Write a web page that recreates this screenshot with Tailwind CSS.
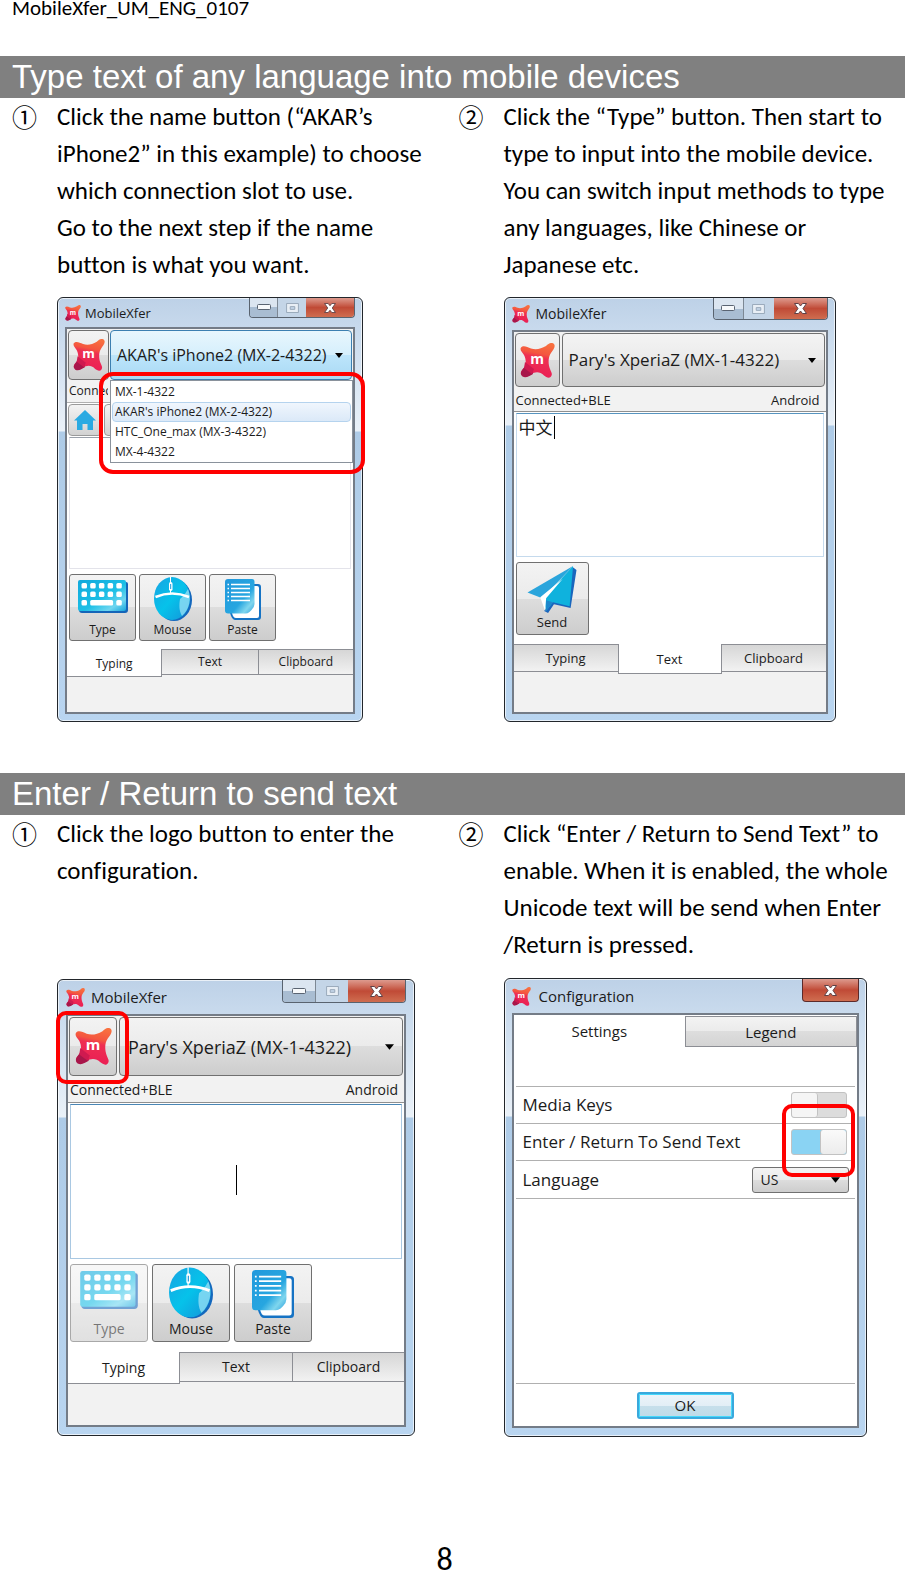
<!DOCTYPE html>
<html lang="en">
<head>
  <meta charset="UTF-8" />
  <meta name="viewport" content="width=device-width, initial-scale=1.0"/>
  <title>MobileXfer User Manual</title>
  <script src="https://cdn.jsdelivr.net/npm/@tailwindcss/browser@4"></script>
</head>
<body class="bg-white text-black font-[Carlito,Lato,sans-serif] [font-variant-ligatures:none]">

  <!-- Shared icons -->
  <svg class="absolute w-0 h-0" aria-hidden="true">
    <defs>
      <linearGradient id="logoFill" x1="0.6" y1="0" x2="0.4" y2="1">
        <stop offset="0" stop-color="#f8703f"/>
        <stop offset="0.3" stop-color="#f4563f"/>
        <stop offset="0.42" stop-color="#ee2f52"/>
        <stop offset="1" stop-color="#ea1d55"/>
      </linearGradient>
      <linearGradient id="cyanFill" x1="0" y1="0" x2="1" y2="1">
        <stop offset="0" stop-color="#12a9dc"/>
        <stop offset="0.55" stop-color="#1cbfe6"/>
        <stop offset="0.8" stop-color="#6fd6f0"/>
        <stop offset="1" stop-color="#17a5dc"/>
      </linearGradient>
      <linearGradient id="mouseFill" x1="0" y1="0" x2="1" y2="1">
        <stop offset="0" stop-color="#19a3e2"/>
        <stop offset="0.5" stop-color="#06c2ea"/>
        <stop offset="1" stop-color="#1593d8"/>
      </linearGradient>
      <linearGradient id="pasteFill" x1="0" y1="0" x2="1" y2="1">
        <stop offset="0" stop-color="#2298dc"/>
        <stop offset="0.6" stop-color="#27a6e0"/>
        <stop offset="0.8" stop-color="#7fd6ee"/>
        <stop offset="1" stop-color="#2c9fdc"/>
      </linearGradient>
    </defs>
    <symbol id="logo" viewBox="0 0 35 35">
      <path fill="url(#logoFill)" d="M1 4.500C3 2 7 3.500 11 5.500c5 1.500 10 .5 15-2.500 3-3 6-4 8-2 2 3-1 6-3 9-3 4-3 11-1 16 1 3 3 5 1 7.500-2 2.500-5 .5-7-1-4-4-9-4-13-1-3 2-6 3-8.500 1C-.5 31 1 28 3 26c4-4 3-10 1-14C2 9-.5 7 1 4.500z"/>
      <path fill="#a8164a" d="M4.500 24l7 2 1.500 5c-4 2-7 4.500-10.500 2.500C-.5 31 1 28 4.500 24z"/>
      <path fill="#cf1a50" d="M5 19l9 7-2 5-8-6z"/>
      <text x="17" y="21" text-anchor="middle" font-size="14" font-weight="700" fill="#fff" font-family="Open Sans, sans-serif">m</text>
    </symbol>
    <symbol id="keyboard" viewBox="0 0 50 33">
      <path fill="#1565b8" d="M3 2h45q2 0 2 2v26q0 3-3 3H4q-3 0-3-3z"/>
      <rect width="48" height="31" rx="2" fill="url(#cyanFill)"/>
      <g fill="#fff">
        <rect x="3.500" y="3" width="5.500" height="5.500" rx="1.500"/><rect x="12.200" y="3" width="5.500" height="5.500" rx="1.500"/><rect x="20.900" y="3" width="5.500" height="5.500" rx="1.500"/><rect x="29.600" y="3" width="5.500" height="5.500" rx="1.500"/><rect x="38.300" y="3" width="5.500" height="5.500" rx="1.500"/>
        <rect x="3.500" y="11.500" width="5.500" height="5.500" rx="1.500"/><rect x="12.200" y="11.500" width="5.500" height="5.500" rx="1.500"/><rect x="20.900" y="11.500" width="5.500" height="5.500" rx="1.500"/><rect x="29.600" y="11.500" width="5.500" height="5.500" rx="1.500"/><rect x="38.300" y="11.500" width="5.500" height="5.500" rx="1.500"/>
        <rect x="3.500" y="20" width="5.500" height="5.500" rx="1.500"/><rect x="12.200" y="20" width="22.900" height="5.500" rx="1.500"/><rect x="38.300" y="20" width="5.500" height="5.500" rx="1.500"/>
      </g>
    </symbol>
    <symbol id="mouse" viewBox="0 0 38 44">
      <ellipse cx="20" cy="23" rx="18" ry="21" fill="#1468bd"/>
      <ellipse cx="18" cy="21.500" rx="18" ry="21.500" fill="url(#mouseFill)"/>
      <path fill="#9be2f6" d="M26 22c5-4 6-7 8-10 4 10 1 21-6 27-3-5-3-11-2-17z" opacity=".75"/>
      <path fill="none" stroke="#fff" stroke-width="2.500" d="M1.500 20Q18 13 35 20"/>
      <path stroke="#fff" stroke-width="1" d="M16.500 0v17"/>
      <rect x="15" y="5" width="3.500" height="9" rx="1.700" fill="#fff"/>
      <path stroke="#1698dc" stroke-width="1" d="M16.700 7v5"/>
    </symbol>
    <symbol id="paste" viewBox="0 0 36 41">
      <path fill="#1673c4" d="M10 5h23q3 0 3 3v30q0 3-3 3H10q-3 0-5-7z"/>
      <path fill="#fff" d="M10 7h22q2 0 2 2v28q0 2-2 2H11q-3 0-4-5z"/>
      <path fill="url(#pasteFill)" d="M3 0h24q2.500 0 2.500 3v22q0 3-3 6l-2 2q-2 1.500-4 1.500H3q-3 0-3-3V3q0-3 3-3z"/>
      <path stroke="#fff" stroke-width="1.500" d="M6 5.500h19M6 9.500h19M6 13.500h19M6 17.500h19M6 21.500h19"/>
      <path stroke="#fff" stroke-width="1.500" d="M2.500 5.500h1.500M2.500 9.500h1.500M2.500 13.500h1.500M2.500 17.500h1.500M2.500 21.500h1.500"/>
    </symbol>
    <symbol id="plane" viewBox="0 0 50 49">
      <path fill="#1a66bd" d="M46 1l4 3-6 39-17-4-6 9-4-2z"/>
      <path fill="#2aa5dc" d="M46.500 0L0 27l15 6z"/>
      <path fill="#0fb2dd" d="M46.500 0L43 41l-17-4-7 9-3-13z"/>
      <path fill="#fff" d="M36 13L13 32l5 14 1-13z"/>
      <path fill="#1e86cc" d="M19 35l0 11 7-9z"/>
    </symbol>
    <symbol id="home" viewBox="0 0 22 20">
      <path fill="#29aae2" d="M11 0l11 10.500h-3V20h-5.500v-6h-5v6H3v-9.500H0z"/>
    </symbol>
    <symbol id="minimize" viewBox="0 0 14 7">
      <rect x=".5" y=".5" width="13" height="5" rx="1" fill="#f7f9fb" stroke="#5a6472"/>
    </symbol>
    <symbol id="maximize" viewBox="0 0 14 11">
      <path fill="#e8eef5" fill-rule="evenodd" stroke="#93a3b5" d="M.5.5h13v10H.5zM4.500 4h5v3h-5z"/>
    </symbol>
    <symbol id="close" viewBox="0 0 13 11">
      <path fill="#fff" stroke="#5f4146" d="M.5.5h4l2 2.500 2-2.500h4L9 5.500l3.500 5h-4l-2-2.500-2 2.500h-4L4 5.500z"/>
    </symbol>
    <symbol id="caret" viewBox="0 0 8 5">
      <path fill="#000" d="M0 0h8L4 5z"/>
    </symbol>
  </svg>

  <header class="h-14 pl-3 text-[21px] leading-[16px]">MobileXfer_UM_ENG_0107</header>

  <main>
    <!-- Section 1 -->
    <section class="mb-[51px]">
      <h2 class="bg-[#808080] text-white pl-3 text-[33px] leading-[42px] font-['Liberation_Sans',sans-serif]">Type text of any language into mobile devices</h2>
      <div class="grid grid-cols-2 items-start gap-y-3.5 pl-3 text-[25px] leading-[37px]">
        <div class="flex">
          <span class="w-[45px] shrink-0 text-[25px] font-['Noto_Sans_CJK_JP',sans-serif]">①</span>
          <div>
            <p>Click the name button (“AKAR’s<br>iPhone2” in this example) to choose<br>which connection slot to use.</p>
            <p>Go to the next step if the name<br>button is what you want.</p>
          </div>
        </div>
        <div class="flex">
          <span class="w-[45px] shrink-0 text-[25px] font-['Noto_Sans_CJK_JP',sans-serif]">②</span>
          <p>Click the “Type” button. Then start to<br>type to input into the mobile device.<br>You can switch input methods to type<br>any languages, like Chinese or<br>Japanese etc.</p>
        </div>

        <!-- Device list window -->
        <div class="pl-[45px]">
          <div class="relative w-full max-w-[306px] rounded-md border border-[#22262b] px-[7px] pb-[7px] bg-[linear-gradient(180deg,#bdd1e7_0,#cbdcee_40px,#eaf1f8_133px,#aecbe7_134px,#b9d5f0_100%)] shadow-[inset_0_0_0_1px_#ffffffaa] text-[12px] leading-4 text-[#1b1b1b] font-['Open_Sans',sans-serif]">
            <div class="flex h-[29px] justify-between">
              <div class="flex items-center gap-1 text-[13px]"><svg class="size-4"><use href="#logo"/></svg>MobileXfer</div>
              <div class="flex h-5 overflow-hidden rounded-b border border-t-0 border-[#59636f]">
                <button aria-label="Minimize" class="grid w-7 place-items-center border-r border-[#7d8894] bg-linear-to-b from-[#dbe5f0] from-50% to-[#a9bdd2] to-50%"><svg class="w-[14px] h-[7px]"><use href="#minimize"/></svg></button>
                <button aria-label="Maximize" class="grid w-7 place-items-center bg-[#c4d5e7]"><svg class="w-[13px] h-[10px]"><use href="#maximize"/></svg></button>
                <button aria-label="Close" class="grid w-12 place-items-center bg-linear-to-b from-[#dd9a8e] via-[#c04a36] to-[#cf6d50]"><svg class="w-[12px] h-[10px]"><use href="#close"/></svg></button>
              </div>
            </div>
            <div class="border-2 border-[#747c87] bg-[#f2f2f2]">
              <div class="flex h-[51px] gap-px p-px pb-0">
                <button aria-label="Logo" class="grid w-[41px] shrink-0 place-items-center rounded-sm border border-[#707070] bg-[linear-gradient(180deg,#f3f3f3_0,#ebebeb_50%,#dddddd_50%,#cdcdcd_100%)]"><svg class="size-8"><use href="#logo"/></svg></button>
                <button class="flex grow items-center justify-between rounded-sm border border-[#3c7fb1] bg-[linear-gradient(180deg,#e8f6fd_0,#d5effc_50%,#bde5fb_50%,#a9d9f4_100%)] pl-1.5 pr-2 text-[16px] whitespace-nowrap">AKAR's iPhone2 (MX-2-4322)<svg class="w-2 h-[5px]"><use href="#caret"/></svg></button>
              </div>
              <div class="h-[23px] border-b border-[#b0b0b0] px-0.5 pt-[3px]"><p class="w-[39px] overflow-hidden">Connected</p></div>
              <div class="flex h-[34px] gap-0.5 bg-white p-px">
                <button aria-label="Home" class="grid w-[34px] h-8 place-items-center rounded-sm border border-[#9a9a9a] bg-linear-to-b from-[#f3f3f3] to-[#d2d2d2]"><svg class="w-[22px] h-5"><use href="#home"/></svg></button>
                <button aria-label="Back" class="w-[34px] h-8 rounded-sm border border-[#9a9a9a] bg-linear-to-b from-[#f3f3f3] to-[#d2d2d2]"></button>
              </div>
              <div class="bg-white px-0.5">
                <textarea aria-label="Typing" class="block w-full h-[132px] resize-none border border-[#e3e3ea] border-t-[#9aa0aa]"></textarea>
                <div class="flex gap-[3px] pt-[5px] pb-2">
                  <button class="flex size-[67px] flex-col items-center justify-between rounded-[3px] border border-[#707070] bg-[linear-gradient(180deg,#f3f3f3_0,#ebebeb_50%,#dddddd_50%,#cdcdcd_100%)] pt-[5px] pb-0.5"><svg class="w-[50px] h-[33px]"><use href="#keyboard"/></svg>Type</button>
                  <button class="flex size-[67px] flex-col items-center justify-between rounded-[3px] border border-[#707070] bg-[linear-gradient(180deg,#f3f3f3_0,#ebebeb_50%,#dddddd_50%,#cdcdcd_100%)] pt-0.5 pb-0.5"><svg class="w-[38px] h-[44px]"><use href="#mouse"/></svg>Mouse</button>
                  <button class="flex size-[67px] flex-col items-center justify-between rounded-[3px] border border-[#707070] bg-[linear-gradient(180deg,#f3f3f3_0,#ebebeb_50%,#dddddd_50%,#cdcdcd_100%)] pt-1 pb-0.5"><svg class="w-[36px] h-[41px]"><use href="#paste"/></svg>Paste</button>
                </div>
              </div>
              <div role="tablist" class="grid h-[63px] grid-cols-3 items-start">
                <button role="tab" class="h-7 border-r border-b border-[#8c8e94] bg-white pt-0.5">Typing</button>
                <button role="tab" class="h-[26px] border-y border-[#8c8e94] bg-linear-to-b from-[#d6d6d6] to-[#f2f2f2]">Text</button>
                <button role="tab" class="h-[26px] border border-r-0 border-[#8c8e94] bg-linear-to-b from-[#d6d6d6] to-[#f2f2f2]">Clipboard</button>
              </div>
            </div>
            <!-- Open list -->
            <ul class="absolute left-[52px] right-[9px] top-[82px] h-[83px] border border-[#8a929c] bg-white p-px leading-[19px]">
              <li class="px-[3px] h-5">MX-1-4322</li>
              <li class="px-0.5 h-5 rounded-sm border border-[#b5d3ee] bg-linear-to-b from-[#f0f6fd] to-[#dbe9f8] leading-[18px]">AKAR's iPhone2 (MX-2-4322)</li>
              <li class="px-[3px] h-5">HTC_One_max (MX-3-4322)</li>
              <li class="px-[3px] h-5">MX-4-4322</li>
            </ul>
            <div class="absolute left-[41px] -right-[3px] top-[74px] h-[102px] rounded-[14px] border-4 border-[#ff0000]"></div>
          </div>
        </div>

        <!-- Text window -->
        <div class="pl-[45px]">
          <div class="w-full max-w-[332px] rounded-md border border-[#22262b] px-[7px] pb-[7px] bg-[linear-gradient(180deg,#bdd1e7_0,#cbdcee_40px,#eaf1f8_127px,#aecbe7_128px,#b9d5f0_100%)] shadow-[inset_0_0_0_1px_#ffffffaa] text-[13px] leading-4 text-[#1b1b1b] font-['Open_Sans',sans-serif]">
            <div class="flex h-8 justify-between">
              <div class="flex items-center gap-1.5 text-[14px]"><svg class="size-[18px]"><use href="#logo"/></svg>MobileXfer</div>
              <div class="flex h-[22px] overflow-hidden rounded-b border border-t-0 border-[#59636f]">
                <button aria-label="Minimize" class="grid w-[30px] place-items-center border-r border-[#7d8894] bg-linear-to-b from-[#dbe5f0] from-50% to-[#a9bdd2] to-50%"><svg class="w-[14px] h-[7px]"><use href="#minimize"/></svg></button>
                <button aria-label="Maximize" class="grid w-[30px] place-items-center bg-[#c4d5e7]"><svg class="w-[13px] h-[10px]"><use href="#maximize"/></svg></button>
                <button aria-label="Close" class="grid w-[53px] place-items-center bg-linear-to-b from-[#dd9a8e] via-[#c04a36] to-[#cf6d50]"><svg class="w-[13px] h-[11px]"><use href="#close"/></svg></button>
              </div>
            </div>
            <div class="border-2 border-[#747c87] bg-[#f2f2f2]">
              <div class="flex h-14 gap-0.5 p-px">
                <button aria-label="Logo" class="grid w-[45px] shrink-0 place-items-center rounded-sm border border-[#707070] bg-[linear-gradient(180deg,#f3f3f3_0,#ebebeb_50%,#dddddd_50%,#cdcdcd_100%)]"><svg class="size-[35px]"><use href="#logo"/></svg></button>
                <button class="flex grow items-center justify-between rounded-sm border border-[#707070] bg-[linear-gradient(180deg,#f3f3f3_0,#ebebeb_50%,#dddddd_50%,#cdcdcd_100%)] pl-1.5 pr-2 text-[17px] whitespace-nowrap">Pary's XperiaZ (MX-1-4322)<svg class="w-2 h-[5px]"><use href="#caret"/></svg></button>
              </div>
              <div class="flex h-6 items-center justify-between border-b border-[#8f8f8f] pl-0.5 pr-1.5"><span>Connected+BLE</span><span>Android</span></div>
              <div class="bg-white px-0.5 pt-px">
                <div class="relative">
                  <textarea aria-label="Text" class="block w-full h-36 resize-none border border-[#c5daed] border-t-[#5794bf] px-0.5 text-[17px] leading-[26px] font-['Noto_Sans_CJK_SC',sans-serif]">中文</textarea>
                  <span class="absolute left-[38px] top-[3px] h-[23px] w-px bg-black"></span>
                </div>
                <div class="flex pt-[5px] pb-[9px]">
                  <button class="flex size-[73px] flex-col items-center justify-between rounded-[3px] border border-[#707070] bg-[linear-gradient(180deg,#f3f3f3_0,#ebebeb_50%,#dddddd_50%,#cdcdcd_100%)] pt-[3px] pb-1"><svg class="w-[50px] h-[49px]"><use href="#plane"/></svg>Send</button>
                </div>
              </div>
              <div role="tablist" class="grid h-[68px] grid-cols-3 items-start">
                <button role="tab" class="h-7 border-y border-[#8c8e94] bg-linear-to-b from-[#d6d6d6] to-[#f2f2f2]">Typing</button>
                <button role="tab" class="h-[30px] border border-t-0 border-[#8c8e94] bg-white">Text</button>
                <button role="tab" class="h-7 border-y border-[#8c8e94] bg-linear-to-b from-[#d6d6d6] to-[#f2f2f2]">Clipboard</button>
              </div>
            </div>
          </div>
        </div>
      </div>
    </section>

    <!-- Section 2 -->
    <section>
      <h2 class="bg-[#808080] text-white pl-3 text-[33px] leading-[42px] font-['Liberation_Sans',sans-serif]">Enter / Return to send text</h2>
      <div class="grid grid-cols-2 items-start gap-y-[15px] pl-3 text-[25px] leading-[37px]">
        <div class="flex">
          <span class="w-[45px] shrink-0 text-[25px] font-['Noto_Sans_CJK_JP',sans-serif]">①</span>
          <p>Click the logo button to enter the<br>configuration.</p>
        </div>
        <div class="flex">
          <span class="w-[45px] shrink-0 text-[25px] font-['Noto_Sans_CJK_JP',sans-serif]">②</span>
          <p>Click “Enter / Return to Send Text” to<br>enable. When it is enabled, the whole<br>Unicode text will be send when Enter<br>/Return is pressed.</p>
        </div>

        <!-- Typing window -->
        <div class="pl-[45px] pt-px">
          <div class="relative w-full max-w-[358px] rounded-md border border-[#22262b] px-2 pb-2 bg-[linear-gradient(180deg,#bdd1e7_0,#cbdcee_40px,#eaf1f8_137px,#aecbe7_138px,#b9d5f0_100%)] shadow-[inset_0_0_0_1px_#ffffffaa] text-[14px] leading-4 text-[#1b1b1b] font-['Open_Sans',sans-serif]">
            <div class="flex h-[34px] justify-between">
              <div class="flex items-center gap-1.5 text-[15px]"><svg class="size-[19px]"><use href="#logo"/></svg>MobileXfer</div>
              <div class="flex h-[23px] overflow-hidden rounded-b border border-t-0 border-[#59636f]">
                <button aria-label="Minimize" class="grid w-[33px] place-items-center border-r border-[#7d8894] bg-linear-to-b from-[#dbe5f0] from-50% to-[#a9bdd2] to-50%"><svg class="w-[14px] h-[7px]"><use href="#minimize"/></svg></button>
                <button aria-label="Maximize" class="grid w-8 place-items-center bg-[#c4d5e7]"><svg class="w-[13px] h-[10px]"><use href="#maximize"/></svg></button>
                <button aria-label="Close" class="grid w-[57px] place-items-center bg-linear-to-b from-[#dd9a8e] via-[#c04a36] to-[#cf6d50]"><svg class="w-[13px] h-[11px]"><use href="#close"/></svg></button>
              </div>
            </div>
            <div class="border-2 border-[#747c87] bg-[#f2f2f2]">
              <div class="flex h-[61px] gap-0.5 p-px">
                <button aria-label="Logo" class="grid w-12 shrink-0 place-items-center rounded-sm border border-[#707070] bg-[linear-gradient(180deg,#f3f3f3_0,#ebebeb_50%,#dddddd_50%,#cdcdcd_100%)]"><svg class="size-[37px]"><use href="#logo"/></svg></button>
                <button class="flex grow items-center justify-between rounded-sm border border-[#707070] bg-[linear-gradient(180deg,#f3f3f3_0,#ebebeb_50%,#dddddd_50%,#cdcdcd_100%)] px-2 text-[18px] whitespace-nowrap">Pary's XperiaZ (MX-1-4322)<svg class="w-[9px] h-[6px]"><use href="#caret"/></svg></button>
              </div>
              <div class="flex h-[26px] items-center justify-between border-b border-[#8f8f8f] pl-0.5 pr-1.5"><span>Connected+BLE</span><span>Android</span></div>
              <div class="bg-white px-0.5 pt-px">
                <div class="relative">
                  <textarea aria-label="Typing" class="block w-full h-[155px] resize-none border border-[#a9c8e2] border-t-[#4a86b5]"></textarea>
                  <span class="absolute left-1/2 top-[61px] h-[30px] w-px bg-black"></span>
                </div>
                <div class="flex gap-1 pt-[5px] pb-2.5">
                  <button disabled class="flex size-[78px] flex-col items-center justify-between rounded-[3px] border border-[#707070] bg-[linear-gradient(180deg,#f3f3f3_0,#ebebeb_50%,#dddddd_50%,#cdcdcd_100%)] pt-1.5 pb-1 opacity-60"><svg class="w-[58px] h-[38px]"><use href="#keyboard"/></svg>Type</button>
                  <button class="flex size-[78px] flex-col items-center justify-between rounded-[3px] border border-[#707070] bg-[linear-gradient(180deg,#f3f3f3_0,#ebebeb_50%,#dddddd_50%,#cdcdcd_100%)] pt-0.5 pb-1"><svg class="w-[44px] h-[52px]"><use href="#mouse"/></svg>Mouse</button>
                  <button class="flex size-[78px] flex-col items-center justify-between rounded-[3px] border border-[#707070] bg-[linear-gradient(180deg,#f3f3f3_0,#ebebeb_50%,#dddddd_50%,#cdcdcd_100%)] pt-[5px] pb-1"><svg class="w-[42px] h-[48px]"><use href="#paste"/></svg>Paste</button>
                </div>
              </div>
              <div role="tablist" class="grid h-[73px] grid-cols-3 items-start">
                <button role="tab" class="h-8 border-r border-b border-[#8c8e94] bg-white">Typing</button>
                <button role="tab" class="h-[30px] border-y border-[#8c8e94] bg-linear-to-b from-[#d6d6d6] to-[#f2f2f2]">Text</button>
                <button role="tab" class="h-[30px] border border-r-0 border-[#8c8e94] bg-linear-to-b from-[#d6d6d6] to-[#f2f2f2]">Clipboard</button>
              </div>
            </div>
            <div class="absolute -left-0.5 top-[31px] size-[73px] rounded-[10px] border-4 border-[#ff0000]"></div>
          </div>
        </div>

        <!-- Configuration window -->
        <div class="pl-[45px]">
          <div class="relative w-full max-w-[363px] rounded-md border border-[#22262b] px-[7px] pb-2 bg-[linear-gradient(180deg,#bdd1e7_0,#cbdcee_40px,#eaf1f8_137px,#aecbe7_138px,#b9d5f0_100%)] shadow-[inset_0_0_0_1px_#ffffffaa] text-[15px] leading-4 text-[#1b1b1b] font-['Open_Sans',sans-serif]">
            <div class="flex h-[34px] justify-between">
              <div class="flex items-center gap-2"><svg class="size-[19px]"><use href="#logo"/></svg>Configuration</div>
              <button aria-label="Close" class="grid h-[23px] w-[57px] place-items-center rounded-b border border-t-0 border-[#5c2a2a] bg-linear-to-b from-[#dd9a8e] via-[#c04a36] to-[#cf6d50]"><svg class="w-[13px] h-[11px]"><use href="#close"/></svg></button>
            </div>
            <div class="border-2 border-[#747c87] bg-white">
              <div role="tablist" class="grid h-[71px] grid-cols-2 items-start">
                <button role="tab" class="h-8 bg-white">Settings</button>
                <button role="tab" class="mt-px h-[31px] border border-[#8c8e94] bg-[linear-gradient(180deg,#f3f3f3_0,#ebebeb_50%,#dddddd_50%,#d4d4d4_100%)]">Legend</button>
              </div>
              <div class="mx-0.5 border-y border-[#b0b0b0] text-[17px]">
                <div class="flex h-[37px] items-center justify-between border-b border-[#b0b0b0] pl-[7px] pr-2">
                  <label for="mediaKeys">Media Keys</label>
                  <input type="checkbox" id="mediaKeys" class="flex h-[26px] w-14 appearance-none rounded-[3px] border border-[#c2c2c2] bg-[#dcdcdc] before:block before:h-full before:w-[26px] before:rounded-[3px] before:border-r before:border-[#c2c2c2] before:bg-[#f5f5f5] before:content-['']">
                </div>
                <div class="flex h-[37px] items-center justify-between border-b border-[#b0b0b0] pl-[7px] pr-2">
                  <label for="enterSend">Enter / Return To Send Text</label>
                  <input type="checkbox" id="enterSend" checked class="flex h-[26px] w-14 appearance-none justify-end rounded-[3px] border border-[#c2c2c2] bg-[#8ad3f3] before:block before:h-full before:w-[26px] before:rounded-[3px] before:border-l before:border-[#c2c2c2] before:bg-linear-to-b before:from-[#fafafa] before:to-[#ececec] before:content-['']">
                </div>
                <div class="flex h-[37px] items-center justify-between pl-[7px] pr-1.5">
                  <label for="language">Language</label>
                  <div class="relative">
                    <select id="language" class="block h-[26px] w-[97px] appearance-none rounded-[3px] border border-[#707070] bg-[linear-gradient(180deg,#f3f3f3_0,#ebebeb_50%,#dddddd_50%,#cdcdcd_100%)] pl-2 text-[14px]">
                      <option>US</option>
                    </select>
                    <svg class="pointer-events-none absolute right-[9px] top-2.5 w-[9px] h-[6px]"><use href="#caret"/></svg>
                  </div>
                </div>
              </div>
              <div class="mx-0.5 h-[185px] border-b border-[#b0b0b0]"></div>
              <div class="grid h-[42px] place-items-center">
                <button class="h-[27px] w-[97px] rounded-[3px] border-2 border-[#3aa8dc] bg-[linear-gradient(180deg,#edf4f9_0,#e2eef6_50%,#c6dfeb_50%,#bfdbe8_100%)] shadow-[inset_0_0_0_1px_#45d8fb]">OK</button>
              </div>
            </div>
            <div class="absolute right-[11px] top-[125px] size-[73px] rounded-[10px] border-4 border-[#ff0000]"></div>
          </div>
        </div>
      </div>
    </section>
  </main>

  <footer class="pt-[108px] pr-4 text-center text-[32px] leading-[30px]">8</footer>

</body>
</html>
